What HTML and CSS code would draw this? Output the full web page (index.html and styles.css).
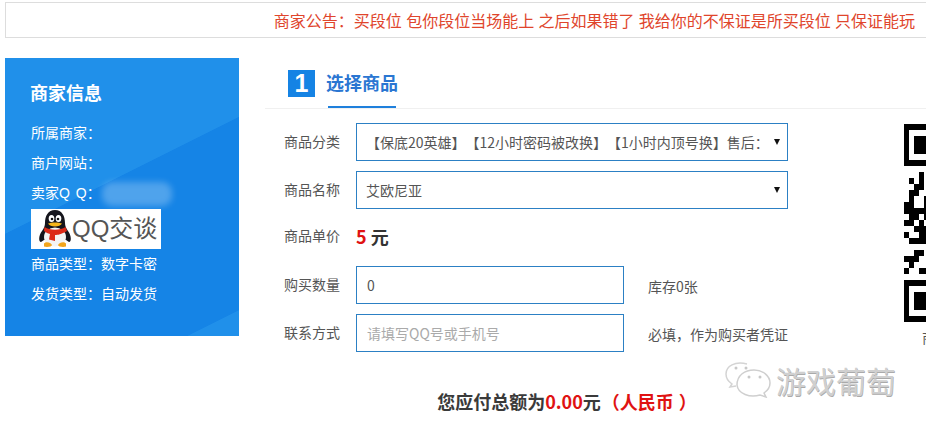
FILE: index.html
```html
<!DOCTYPE html>
<html lang="zh-CN">
<head>
<meta charset="utf-8">
<title>选择商品</title>
<link rel="stylesheet" href="styles.css">
</head>
<body>
<div class="notice">商家公告<span class="cp">：</span>买段位 包你段位当场能上 之后如果错了 我给你的不保证是所买段位 只保证能玩</div>
<div class="content">
  <aside class="side">
    <h2 class="side-title">商家信息</h2>
    <p class="side-row">所属商家<span class="cp">：</span></p>
    <p class="side-row">商户网站<span class="cp">：</span></p>
    <p class="side-row">卖家<span class="latin">Q Q</span><span class="cp">：</span></p>
    <div class="qq-badge">
      <svg class="penguin" viewBox="0 0 32 38" width="32" height="38" aria-hidden="true">
        <path d="M16 0 C23 0 26 6 26 13 C26 16 27 18 29 21 C32 25 33 31 30 32 L27 30 L5 30 L2 32 C-1 31 0 25 3 21 C5 18 6 16 6 13 C6 6 9 0 16 0 Z" fill="#15151c"/>
        <ellipse cx="16" cy="27" rx="11" ry="9.500" fill="#f4f4f4"/>
        <path d="M5.500 17 C11 20.500 21 20.500 26.500 17 L28 21 C22 24.500 19 25 16 25 L16 31 L10 29.500 L11 24 C9 23.500 7 22.500 5 21 Z" fill="#dc2a18"/>
        <ellipse cx="12.500" cy="8.500" rx="2.800" ry="3.500" fill="#fff"/>
        <ellipse cx="19.500" cy="8.500" rx="2.800" ry="3.500" fill="#fff"/>
        <circle cx="13" cy="9" r="1.300" fill="#111"/>
        <circle cx="19" cy="9" r="1.300" fill="#111"/>
        <path d="M9 13.500 C12 12 20 12 23 13.500 C21 17.500 11 17.500 9 13.500 Z" fill="#f6b61a"/>
        <path d="M5 33.500 C7 31 12 32.500 13 35 C13 37 7 37.500 5 36.500 Z" fill="#f2a51c"/>
        <path d="M27 33.500 C25 31 20 32.500 19 35 C19 37 25 37.500 27 36.500 Z" fill="#f2a51c"/>
      </svg>
      <span class="qq-text">QQ交谈</span>
    </div>
    <p class="side-row">商品类型<span class="cp">：</span>数字卡密</p>
    <p class="side-row">发货类型<span class="cp">：</span>自动发货</p>
    <div class="blur-mask"></div>
  </aside>
  <main class="main">
    <header class="step">
      <span class="step-num">1</span>
      <h1 class="step-title">选择商品</h1>
    </header>
    <div class="body">
      <form class="form">
        <div class="row">
          <label class="label">商品分类</label>
          <div class="select"><span class="select-text">【保底20英雄】【12小时密码被改换】【1小时内顶号换】售后<span class="cp">：</span></span></div>
        </div>
        <div class="row">
          <label class="label">商品名称</label>
          <div class="select"><span class="select-text">艾欧尼亚</span></div>
        </div>
        <div class="row row-price">
          <label class="label">商品单价</label>
          <div class="price"><span class="red">5</span> 元</div>
        </div>
        <div class="row">
          <label class="label">购买数量</label>
          <input class="input" type="text" value="0">
          <span class="hint">库存0张</span>
        </div>
        <div class="row">
          <label class="label">联系方式</label>
          <input class="input" type="text" placeholder="请填写QQ号或手机号">
          <span class="hint">必填<span class="cp">，</span>作为购买者凭证</span>
        </div>
      </form>
      <div class="qr-col">
        <svg class="qr" width="175" height="198" viewBox="0 0 175 198" aria-hidden="true">
          <path fill="#000" fill-rule="evenodd" d="M0 0H35V42H0ZM5 6V36H35V6ZM10 12H35V30H10Z"/>
          <path fill="#000" fill-rule="evenodd" d="M0 156H35V198H0ZM5 162V192H35V162ZM10 168H35V186H10Z"/>
          <path fill="#000" d="M15 48h5v6h-5Z M5 54h5v6h-5Z M15 54h5v6h-5Z M10 60h10v6h-10Z M5 66h10v6h-10Z M5 72h5v6h-5Z M20 72h10v6h-10Z M0 78h10v6h-10Z M20 78h10v6h-10Z M0 84h30v6h-30Z M5 90h10v6h-10Z M20 90h10v6h-10Z M0 96h10v6h-10Z M15 96h5v6h-5Z M10 102h20v6h-20Z M0 108h5v6h-5Z M15 108h15v6h-15Z M5 114h25v6h-25Z M10 126h10v6h-10Z M0 132h15v6h-15Z M5 138h5v6h-5Z M0 144h5v6h-5Z M15 144h15v6h-15Z"/>
        </svg>
        <p class="qr-caption">商</p>
      </div>
    </div>
    <p class="total">您应付总额为<span class="red">0.00</span>元<span class="red rmb">（人民<span>币</span><span class="rmb-end">）</span></span></p>
  </main>
</div>
<div class="watermark">
  <svg class="wechat" width="46" height="36" viewBox="0 0 46 36" aria-hidden="true">
    <path d="M22 2 C10 -1 1 4 1 12 C1 17 4 20 7 22 L5 25 L11 24" fill="none" stroke="#d4d4d4" stroke-width="1.500"/>
    <path d="M12 23 C12 13 20 8 29 8 C38 8 45 14 45 21 C45 26 42 29 39 31 L41 35 L35 33 C25 36 13 32 12 23 Z" fill="#fff" stroke="#cfcfcf" stroke-width="1.500"/>
    <circle cx="11" cy="6" r="1.500" fill="#c8c8c8"/>
    <circle cx="21" cy="6" r="1.500" fill="#c8c8c8"/>
    <circle cx="24" cy="15" r="1.500" fill="#c8c8c8"/>
    <circle cx="35" cy="15" r="1.500" fill="#c8c8c8"/>
  </svg>
  <span class="wm-text">游戏葡萄</span>
</div>
</body>
</html>
```

FILE: styles.css
```css
* { box-sizing: border-box; }
html, body { margin: 0; padding: 0; width: 926px; height: 426px; overflow: hidden; background: #fff; }
body {
  position: relative;
  font-family: "Noto Sans CJK SC", "Liberation Sans", sans-serif;
  color: #555;
  font-size: 14px;
  text-spacing-trim: space-all;
}
p, h1, h2 { margin: 0; font-weight: normal; }
.cp { font-family: "Noto Sans CJK TC", sans-serif; }
.latin { font-family: "Liberation Sans", sans-serif; word-spacing: 2px; }

.notice {
  margin: 2px 0 0 5px;
  height: 36px;
  border: 1px solid #ddd;
  border-right: 0;
  padding-right: 11px;
  text-align: right;
  font-size: 16px;
  line-height: 34px;
  word-spacing: 0.7px;
  color: #e0452c;
  white-space: nowrap;
}

.content { display: flex; align-items: flex-start; margin-top: 20px; }

.side {
  position: relative;
  flex: none;
  width: 234px;
  height: 278px;
  margin-left: 5px;
  padding: 20px 0 0 26px;
  color: #fff;
  background: linear-gradient(153.43deg, #2090ea 157px, #1584e6 157.5px, #1584e6 330px, #2090ea 330.5px);
}
.side-title { font-size: 18px; font-weight: 700; line-height: 28px; margin-bottom: 11px; margin-left: -1px; }
.side-row { font-size: 14px; line-height: 30px; white-space: nowrap; }
.qq-badge {
  display: flex;
  align-items: center;
  width: 130px;
  height: 40px;
  margin: 1px 0 -1px;
  padding-left: 8px;
  background: #fff;
}
.penguin { flex: none; }
.qq-text { font-size: 24px; line-height: 40px; color: #555; margin-left: 1px; font-family: "Liberation Sans", "Noto Sans CJK SC", sans-serif; white-space: nowrap; }
.blur-mask {
  position: absolute;
  left: 97px;
  top: 124px;
  width: 70px;
  height: 24px;
  border-radius: 10px;
  background: rgba(255, 255, 255, 0.25);
  filter: blur(3px);
}

.main { flex: 1; min-width: 0; margin-left: 26px; }
.step {
  display: flex;
  align-items: flex-start;
  height: 51px;
  padding: 12px 0 0 23px;
  border-bottom: 1px solid #f0f0f0;
}
.step-num {
  flex: none;
  width: 27px;
  height: 27px;
  background: #1583e4;
  color: #fff;
  font: 700 25px/27px "Liberation Sans", sans-serif;
  text-align: center;
}
.step-title {
  position: relative;
  margin-left: 11px;
  height: 38px;
  font-size: 18px;
  font-weight: 700;
  line-height: 24px;
  color: #2a76d2;
  white-space: nowrap;
}
.step-title::after {
  content: "";
  position: absolute;
  left: 2px;
  right: 2px;
  bottom: 0;
  height: 2px;
  background: #1f80dc;
}

.body { display: flex; align-items: flex-start; padding: 14px 0 0 19px; }
.form { flex: none; width: 504px; }
.row { display: flex; align-items: center; min-height: 38px; margin-bottom: 10px; }
.row-price { min-height: 34px; margin-bottom: 13px; }
.label { flex: none; width: 72px; font-size: 14px; line-height: 20px; color: #555; margin-top: -2px; }
.select {
  position: relative;
  flex: none;
  width: 432px;
  height: 38px;
  border: 1px solid #2c80c4;
  line-height: 36px;
  white-space: nowrap;
  overflow: hidden;
}
.select::after {
  content: "";
  position: absolute;
  right: 7px;
  top: 15px;
  border-left: 3px solid transparent;
  border-right: 3px solid transparent;
  border-top: 6px solid #111;
}
.select-text { display: block; padding-left: 9px; font-size: 14px; color: #555; }
.price { font-size: 18px; font-weight: 700; color: #333; line-height: 34px; }
.input {
  flex: none;
  width: 268px;
  height: 38px;
  padding: 0 10px;
  border: 1px solid #2c80c4;
  border-radius: 0;
  outline: 0;
  background: #fff;
  font: 14px "Noto Sans CJK SC", "Liberation Sans", sans-serif;
  color: #555;
}
.input::placeholder { color: #aaa; opacity: 1; }
.hint { margin: 2px 0 0 24px; font-size: 14px; line-height: 20px; color: #555; white-space: nowrap; }

.qr-col { flex: none; margin-left: 116px; padding-top: 1px; }
.qr { display: block; }
.qr-caption { margin: 5px 0 0 18px; font-size: 14px; line-height: 20px; white-space: nowrap; color: #555; }

.total {
  margin: 26px 57px 0 0;
  text-align: center;
  font-size: 18px;
  font-weight: 700;
  line-height: 26px;
  color: #3a3a3a;
}
.red { color: #e01212; }
.rmb { margin-left: 1px; }
.rmb-end { margin-left: 5px; }

.watermark {
  position: absolute;
  left: 725px;
  top: 362px;
  display: flex;
  align-items: center;
  gap: 5px;
}
.wechat { flex: none; }
.wm-text {
  font-size: 30px;
  line-height: 36px;
  color: #d0d0d0;
  text-shadow: 0.5px 0.5px 0 #aaa;
  white-space: nowrap;
}
```
